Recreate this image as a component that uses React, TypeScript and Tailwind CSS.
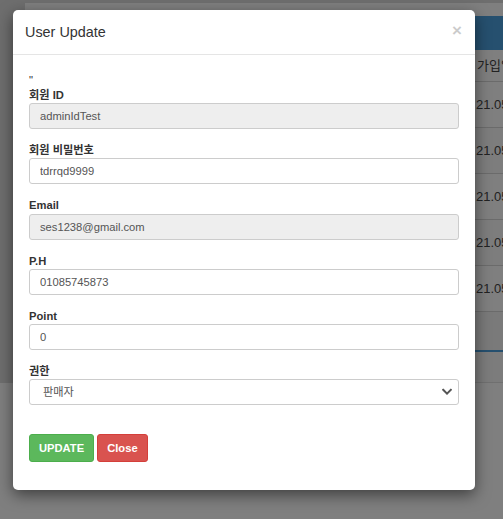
import React from "react";

const font = { fontFamily: '"Liberation Sans", Arial, "Noto Sans CJK KR", sans-serif' };

function Field({ label, value, disabled }: { label: string; value: string; disabled?: boolean }) {
  return (
    <div className="mb-[14px]">
      <label className="block text-[11.2px] font-bold leading-[15.2px] text-[#333]">{label}</label>
      <input
        readOnly
        value={value}
        className={`block h-[26px] w-full rounded-[3px] border border-[#ccc] px-[10px] text-[11.2px] text-[#555] outline-none ${
          disabled ? "bg-[#eee]" : "bg-white"
        }`}
        style={font}
      />
    </div>
  );
}

export default function App() {
  const rows = ["21.05", "21.05", "21.05", "21.05", "21.05"];
  return (
    <div className="relative h-[519px] w-[503px] overflow-hidden bg-[#fefefe]" style={font}>
      {/* underlying page */}
      <div className="flex flex-col">
        <div className="flex">
          <div className="w-[25px] shrink-0 bg-[#dcdcdc]" />
          <div className="flex min-w-0 flex-1 flex-col">
            <div className="h-[3px] bg-[#dcdcdc]" />
            <div className="flex flex-col overflow-hidden whitespace-nowrap bg-white">
              <div className="h-[13px]" />
              <div className="h-[34px] bg-[#4ca0de]" />
              <div className="flex h-[32px] items-center border-b border-[#d6d6d6] pl-[452px] text-[13px] text-[#444]">
                가입일
              </div>
              {rows.map((r, i) => (
                <div
                  key={i}
                  className={`flex h-[46px] items-center border-b border-[#d6d6d6] pl-[451px] text-[13px] text-[#444] ${
                    i % 2 === 0 ? "bg-white" : "bg-[#fafafa]"
                  }`}
                >
                  {r}
                </div>
              ))}
              <div className="h-[40px] border-b-2 border-[#4ca0de] bg-[#f4f4f4]" />
              <div className="h-[31px] border-b border-[#e0e0e0] bg-[#f8f8f8]" />
            </div>
          </div>
        </div>
      </div>

      {/* backdrop */}
      <div className="absolute inset-0 bg-black/50" />

      {/* modal */}
      <div className="absolute left-[13px] top-[10px] flex h-[480px] w-[462px] flex-col rounded-[5px] bg-white shadow-[0_5px_15px_rgba(0,0,0,0.5)]">
        <div className="flex h-[45px] shrink-0 items-start justify-between border-b border-[#e5e5e5] pl-[12px] pr-[13px]">
          <h4 className="mt-[12px] text-[14.4px] leading-[20px] text-[#333]">User Update</h4>
          <span className="mt-[12px] text-[17px] font-bold leading-[17px] text-black opacity-20">×</span>
        </div>
        <div className="px-[16px] pt-[18px]">
          <div className="text-[11.2px] leading-[15px] text-[#333]">{'"'}</div>
          <Field label="회원 ID" value="adminIdTest" disabled />
          <Field label="회원 비밀번호" value="tdrrqd9999" />
          <Field label="Email" value="ses1238@gmail.com" disabled />
          <Field label="P.H" value="01085745873" />
          <Field label="Point" value="0" />
          <div>
            <label className="block text-[11.2px] font-bold leading-[15.2px] text-[#333]">권한</label>
            <div className="relative h-[26px] w-full rounded-[3px] border border-[#ccc] bg-white">
              <div className="flex h-full items-center pl-[13px] text-[11.2px] text-[#555]">판매자</div>
              <svg
                className="absolute right-[6px] top-[8px]"
                width="10"
                height="8"
                viewBox="0 0 10 8"
                fill="none"
              >
                <path d="M1.2 1.8 L5 5.6 L8.8 1.8" stroke="#555" strokeWidth="2" strokeLinecap="square" />
              </svg>
            </div>
          </div>
          <div className="mt-[29px] flex gap-[3px]">
            <button className="h-[28px] rounded-[3px] border border-[#4cae4c] bg-[#5cb85c] px-[9px] text-[11.2px] font-bold text-white">
              UPDATE
            </button>
            <button className="h-[28px] rounded-[3px] border border-[#d43f3a] bg-[#d9534f] px-[9px] text-[11.2px] font-bold text-white">
              Close
            </button>
          </div>
        </div>
      </div>
    </div>
  );
}
